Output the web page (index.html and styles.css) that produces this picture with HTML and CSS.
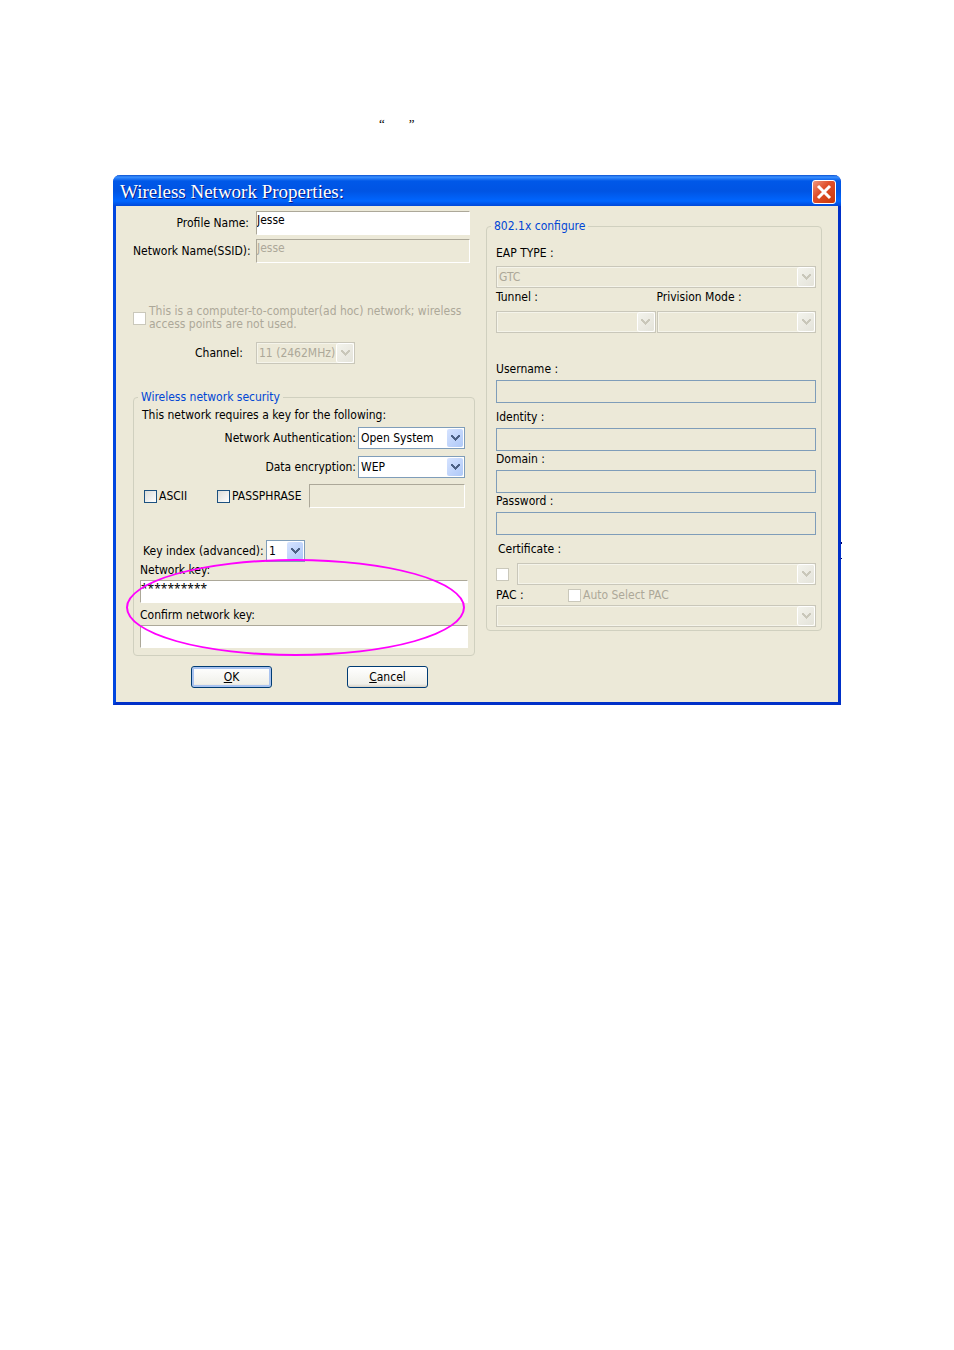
FILE: index.html
```
<!DOCTYPE html>
<html lang="en">
    <head>
        <meta charset="utf-8">
        <title>Wireless Network Properties</title>
        <link rel="stylesheet" href="styles.css">
    </head>
    <body>
        <svg width="0" height="0" class="defs">
            <symbol id="arrow" viewBox="0 0 9 6">
                <path d="M0 0h2v1h1v1h1v1h1v-1h1v-1h1v-1h2v2h-1v1h-1v1h-1v1h-1v1h-1v-1h-1v-1h-1v-1h-1v-1h-1z" fill="currentColor"/>
            </symbol>
        </svg>

        <p class="quote"><span>“</span><span>”</span></p>

        <div class="window">
            <div class="titlebar">
                <h1>Wireless Network Properties:</h1>
                <button type="button" class="close" aria-label="Close">
                    <svg width="22" height="22" viewBox="0 0 22 22"><path d="M5 5l12 12M17 5L5 17" stroke="#fff" stroke-width="3"/></svg>
                </button>
            </div>

            <form class="content">
                <div class="left">
                    <div class="row name">
                        <label for="profile">Profile Name:</label>
                        <input type="text" id="profile" value="Jesse">
                    </div>
                    <div class="row name">
                        <label for="ssid">Network Name(SSID):</label>
                        <input type="text" id="ssid" value="Jesse" disabled>
                    </div>

                    <div class="row adhoc">
                        <input type="checkbox" id="adhoc" disabled>
                        <label for="adhoc">This is a computer-to-computer(ad hoc) network; wireless access points are not used.</label>
                    </div>

                    <div class="row channel">
                        <label for="channel">Channel:</label>
                        <span class="select">
                            <select id="channel" disabled><option>11 (2462MHz)</option></select>
                            <span class="arrow"><svg><use href="#arrow"/></svg></span>
                        </span>
                    </div>

                    <fieldset class="security">
                        <legend>Wireless network security</legend>
                        <p>This network requires a key for the following:</p>
                        <div class="row pick">
                            <label for="auth">Network Authentication:</label>
                            <span class="select">
                                <select id="auth"><option>Open System</option></select>
                                <span class="arrow"><svg><use href="#arrow"/></svg></span>
                            </span>
                        </div>
                        <div class="row pick">
                            <label for="encryption">Data encryption:</label>
                            <span class="select">
                                <select id="encryption"><option>WEP</option></select>
                                <span class="arrow"><svg><use href="#arrow"/></svg></span>
                            </span>
                        </div>
                        <div class="row format">
                            <input type="checkbox" id="ascii">
                            <label for="ascii">ASCII</label>
                            <input type="checkbox" id="passphrase">
                            <label for="passphrase">PASSPHRASE</label>
                            <input type="text" aria-label="Passphrase" disabled>
                        </div>
                        <div class="row index">
                            <label for="index">Key index (advanced):</label>
                            <span class="select">
                                <select id="index"><option>1</option></select>
                                <span class="arrow"><svg><use href="#arrow"/></svg></span>
                            </span>
                        </div>
                        <div class="keys">
                            <label for="key">Network key:</label>
                            <input type="text" id="key" value="**********">
                            <label for="confirm">Confirm network key:</label>
                            <input type="text" id="confirm">
                            <div class="circle"></div>
                        </div>
                    </fieldset>

                    <div class="buttons">
                        <button type="button" class="ok"><u>O</u>K</button>
                        <button type="button"><u>C</u>ancel</button>
                    </div>
                </div>

                <fieldset class="right">
                    <legend>802.1x configure</legend>
                    <div class="field eap">
                        <label for="eap">EAP TYPE :</label>
                        <span class="select">
                            <select id="eap" disabled><option>GTC</option></select>
                            <span class="arrow"><svg><use href="#arrow"/></svg></span>
                        </span>
                    </div>
                    <div class="modes">
                        <div class="field">
                            <label for="tunnel">Tunnel :</label>
                            <span class="select">
                                <select id="tunnel" disabled></select>
                                <span class="arrow"><svg><use href="#arrow"/></svg></span>
                            </span>
                        </div>
                        <div class="field">
                            <label for="mode">Privision Mode :</label>
                            <span class="select">
                                <select id="mode" disabled></select>
                                <span class="arrow"><svg><use href="#arrow"/></svg></span>
                            </span>
                        </div>
                    </div>
                    <div class="field text user">
                        <label for="username">Username :</label>
                        <input type="text" id="username" disabled>
                    </div>
                    <div class="field text">
                        <label for="identity">Identity :</label>
                        <input type="text" id="identity" disabled>
                    </div>
                    <div class="field text">
                        <label for="domain">Domain :</label>
                        <input type="text" id="domain" disabled>
                    </div>
                    <div class="field text">
                        <label for="password">Password :</label>
                        <input type="text" id="password" disabled>
                    </div>
                    <label for="certificate" class="certlabel">Certificate :</label>
                    <div class="row cert">
                        <input type="checkbox" aria-label="Use certificate" disabled>
                        <span class="select">
                            <select id="certificate" disabled></select>
                            <span class="arrow"><svg><use href="#arrow"/></svg></span>
                        </span>
                    </div>
                    <div class="row pac">
                        <label for="pac">PAC :</label>
                        <input type="checkbox" id="autopac" disabled>
                        <label for="autopac" class="off">Auto Select PAC</label>
                    </div>
                    <span class="select">
                        <select id="pac" disabled></select>
                        <span class="arrow"><svg><use href="#arrow"/></svg></span>
                    </span>
                </fieldset>
            </form>
        </div>
    </body>
</html>
```
FILE: styles.css
```
* {
    box-sizing: border-box;
}

body {
    margin: 0;
    padding: 116px 113px 40px;
    background: white;
    color: black;
    font-family: "DejaVu Sans Condensed", "Noto Sans", sans-serif;
    font-size: 12px;
    line-height: 16px;
}

p, h1, fieldset {
    margin: 0;
    padding: 0;
}

.defs {
    position: absolute;
}

.quote {
    display: flex;
    gap: 24px;
    height: 59px;
    padding-left: 266px;
    font-family: "Liberation Serif", serif;
    font-size: 13px;
}

/* window frame */

.window {
    position: relative;
    border: 3px solid #0046e0;
    border-top: 0;
    border-right-color: #0030c8;
    border-bottom-color: #0030c8;
    border-radius: 7px 7px 0 0;
    background: #ece9d8;
}

.window::after {
    content: "";
    position: absolute;
    right: -4px;
    top: 367px;
    width: 1px;
    height: 14px;
    border: solid #000060;
    border-width: 2px 0 1px;
}

.titlebar {
    display: flex;
    justify-content: space-between;
    align-items: center;
    height: 31px;
    margin: 0 -3px;
    padding: 2px 5px 0 7px;
    border-radius: 7px 7px 0 0;
    background: linear-gradient(#0a50d0, #3a90ff 2px, #0058e8 6px, #0054e3 16px, #0066ff 26px, #0048d8);
}

h1 {
    color: white;
    font-family: "Liberation Serif", serif;
    font-size: 19px;
    font-weight: normal;
    line-height: 24px;
    text-shadow: 1px 1px #0a1883;
}

.close {
    width: 24px;
    height: 24px;
    padding: 0;
    border: 1px solid white;
    border-radius: 3px;
    background: linear-gradient(135deg, #f09880, #e0502c 40%, #c83808);
}

.close svg {
    display: block;
}

.content {
    display: grid;
    grid-template-columns: minmax(0, 342fr) minmax(0, 336fr);
    gap: 11px;
    align-items: start;
    padding: 5px 16px 14px 17px;
}

/* controls */

input, select, button {
    margin: 0;
    font: inherit;
    color: black;
}

input[type=text] {
    display: block;
    width: 100%;
    height: 24px;
    padding: 0 0 7px;
    border: 1px solid #aca899;
    border-right-color: white;
    border-bottom-color: white;
    border-radius: 0;
    background: white;
}

input[type=text]:disabled {
    background: #ece9d8;
    color: #aca899;
}

input[type=checkbox] {
    flex: none;
    appearance: none;
    width: 13px;
    height: 13px;
    border: 1px solid #1c5180;
    background: linear-gradient(135deg, #dcdcd7, white);
}

input[type=checkbox]:disabled {
    border-color: #cac8bb;
    background: white;
}

.select {
    position: relative;
    display: block;
    height: 22px;
}

select {
    display: block;
    appearance: none;
    width: 100%;
    height: 100%;
    padding: 0 2px;
    border: 1px solid #7f9db9;
    border-radius: 0;
    background: white;
}

select:disabled {
    border-color: #c9c7ba;
    background: #ece9d8;
    box-shadow: inset 0 0 0 1px #f5f4ea;
    color: #aca899;
    opacity: 1;
}

.arrow {
    position: absolute;
    top: 2px;
    right: 2px;
    bottom: 2px;
    display: flex;
    justify-content: center;
    align-items: center;
    width: 16px;
    border-radius: 2px;
    background: linear-gradient(135deg, #d6e3ff, #aec8f7);
    color: #4d6185;
    pointer-events: none;
}

.arrow svg {
    width: 9px;
    height: 6px;
}

select:disabled + .arrow {
    background: linear-gradient(135deg, #f3f3ec, #e4e3da);
    box-shadow: 0 0 0 1px white;
    color: #c9c7ba;
}

fieldset {
    min-width: 0;
    border: 1px solid #d0d0bf;
    border-radius: 4px;
}

legend {
    margin-left: -2px;
    padding: 0 3px;
    color: #0046d5;
}

.row {
    display: flex;
    align-items: center;
}

/* left side */

.name {
    gap: 7px;
    margin-bottom: 4px;
}

.name label {
    flex: none;
    width: 116px;
    text-align: right;
    white-space: nowrap;
}

.name input {
    margin-right: 5px;
}

.adhoc {
    gap: 3px;
    margin-top: 42px;
    color: #aca899;
    line-height: 13px;
}

.adhoc label {
    flex: 1;
}

.channel {
    margin-top: 11px;
}

.channel label {
    width: 123px;
    padding-right: 13px;
    text-align: right;
}

.channel .select {
    width: 99px;
}

.security {
    margin-top: 25px;
    padding: 2px 6px 7px;
}

.security p {
    margin: 0 2px 4px;
}

.pick {
    justify-content: flex-end;
    gap: 2px;
    margin: 0 3px 7px 0;
}

.pick .select {
    width: 107px;
}

.format {
    gap: 2px;
    margin: -1px 3px 32px 4px;
}

.format label:nth-of-type(1) {
    width: 56px;
}

.format label:nth-of-type(2) {
    width: 75px;
}

.format input[type=text] {
    flex: 1;
    width: auto;
    min-width: 0;
}

.index label {
    width: 126px;
    padding-left: 3px;
}

.index .select {
    width: 39px;
}

.keys {
    position: relative;
}

.keys label {
    display: block;
    margin-bottom: 2px;
}

.keys input[type=text] {
    height: 23px;
    font-family: "Noto Sans", sans-serif;
}

.keys input + label {
    margin-top: 4px;
}

.circle {
    position: absolute;
    top: -3px;
    right: 3px;
    bottom: -8px;
    left: -14px;
    border: 2px solid #f0f;
    border-radius: 50%;
    pointer-events: none;
}

.buttons {
    display: flex;
    gap: 75px;
    margin-top: 10px;
    padding-left: 58px;
}

.buttons button {
    width: 81px;
    height: 22px;
    padding: 0;
    border: 1px solid #003c74;
    border-radius: 3px;
    background: linear-gradient(white, #f0f0ea 85%, #d6d0c5);
}

.buttons .ok {
    box-shadow: inset 0 0 0 2px #a9c3f0;
}

/* right side */

.right {
    margin-top: 7px;
    padding: 11px 5px 3px 9px;
}

.right legend {
    margin-left: -5px;
}

.field label {
    display: block;
}

.eap .select {
    margin-top: 5px;
}

.modes {
    display: grid;
    grid-template-columns: 1fr 1fr;
    gap: 1px;
    margin-top: 1px;
    margin-bottom: 28px;
}

.modes .select {
    margin-top: 6px;
}

.text input[type=text] {
    height: 23px;
    margin-top: 3px;
    border: 1px solid #7f9db9;
}

.user {
    margin-bottom: 6px;
}

.certlabel {
    display: block;
    margin: 6px 0 6px 2px;
}

.cert {
    gap: 8px;
}

.cert .select {
    flex: 1;
}

.pac {
    gap: 2px;
    margin: 2px 0;
}

.pac label:first-child {
    width: 70px;
}

.off {
    color: #aca899;
}
```
